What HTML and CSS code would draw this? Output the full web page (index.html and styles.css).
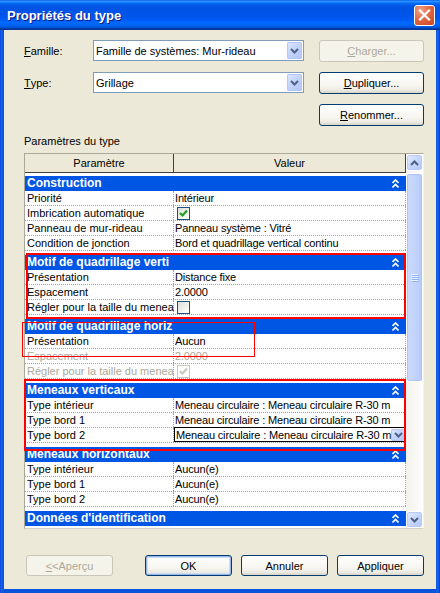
FILE: index.html
```html
<!DOCTYPE html>
<html lang="fr">
<head>
<meta charset="utf-8">
<title>Propriétés du type</title>
<link rel="stylesheet" href="styles.css">
</head>
<body>
<div class="window">
  <div class="titlebar">
    <span class="title">Propriétés du type</span>
    <span class="close"><svg width="19" height="18" viewBox="0 0 19 18"><path d="M5 4.5 L14 13.5 M14 4.5 L5 13.5" stroke="#fff" stroke-width="2.2" stroke-linecap="square"/></svg></span>
  </div>
  <div class="client">
    <div class="form">
      <span class="lbl"><u>F</u>amille:</span>
      <div class="combo"><span class="combo-text">Famille de systèmes: Mur-rideau</span><span class="dd"><svg width="9" height="6" viewBox="0 0 9 6"><path d="M1 1 L4.5 4.5 L8 1" fill="none" stroke="#4D6185" stroke-width="2"/></svg></span></div>
      <button class="btn disabled"><u>C</u>harger...</button>
      <span class="lbl"><u>T</u>ype:</span>
      <div class="combo"><span class="combo-text">Grillage</span><span class="dd"><svg width="9" height="6" viewBox="0 0 9 6"><path d="M1 1 L4.5 4.5 L8 1" fill="none" stroke="#4D6185" stroke-width="2"/></svg></span></div>
      <button class="btn"><u>D</u>upliquer...</button>
      <button class="btn r3"><u>R</u>enommer...</button>
    </div>

    <div class="section-label">Paramètres du type</div>

    <div class="grid-wrap">
      <div class="grid-box">
        <div class="grid">
          <div class="hdr"><div class="hc1">Paramètre</div><div class="hc2">Valeur</div></div>

          <div class="group first">
            <div class="ghead"><span class="gtitle">Construction</span><svg class="caret" width="7" height="9" viewBox="0 0 7 9"><path d="M0.5 4 L3.5 1 L6.5 4 M0.5 8.5 L3.5 5.5 L6.5 8.5" fill="none" stroke="#fff" stroke-width="1.6"/></svg></div>
            <div class="row"><div class="c1">Priorité</div><div class="c2">Intérieur</div></div>
            <div class="row"><div class="c1">Imbrication automatique</div><div class="c2"><span class="chk"><svg width="11" height="11" viewBox="0 0 11 11"><path d="M2 5 L4.5 7.5 L9 2.5" fill="none" stroke="#21A121" stroke-width="2.2"/></svg></span></div></div>
            <div class="row"><div class="c1">Panneau de mur-rideau</div><div class="c2">Panneau système : Vitré</div></div>
            <div class="row"><div class="c1">Condition de jonction</div><div class="c2">Bord et quadrillage vertical continu</div></div>
          </div>

          <div class="group">
            <div class="ghead"><span class="gtitle">Motif de quadrillage verti</span><svg class="caret" width="7" height="9" viewBox="0 0 7 9"><path d="M0.5 4 L3.5 1 L6.5 4 M0.5 8.5 L3.5 5.5 L6.5 8.5" fill="none" stroke="#fff" stroke-width="1.6"/></svg></div>
            <div class="row"><div class="c1">Présentation</div><div class="c2">Distance fixe</div></div>
            <div class="row"><div class="c1">Espacement</div><div class="c2">2.0000</div></div>
            <div class="row"><div class="c1">Régler pour la taille du menea</div><div class="c2"><span class="chk"></span></div></div>
          </div>

          <div class="group">
            <div class="ghead"><span class="gtitle">Motif de quadrillage horiz</span><svg class="caret" width="7" height="9" viewBox="0 0 7 9"><path d="M0.5 4 L3.5 1 L6.5 4 M0.5 8.5 L3.5 5.5 L6.5 8.5" fill="none" stroke="#fff" stroke-width="1.6"/></svg></div>
            <div class="row"><div class="c1">Présentation</div><div class="c2">Aucun</div></div>
            <div class="row off"><div class="c1">Espacement</div><div class="c2">2.0000</div></div>
            <div class="row off"><div class="c1">Régler pour la taille du menea</div><div class="c2"><span class="chk dis"><svg width="11" height="11" viewBox="0 0 11 11"><path d="M2 5 L4.5 7.5 L9 2.5" fill="none" stroke="#CAC8BB" stroke-width="2.2"/></svg></span></div></div>
          </div>

          <div class="group">
            <div class="ghead"><span class="gtitle">Meneaux verticaux</span><svg class="caret" width="7" height="9" viewBox="0 0 7 9"><path d="M0.5 4 L3.5 1 L6.5 4 M0.5 8.5 L3.5 5.5 L6.5 8.5" fill="none" stroke="#fff" stroke-width="1.6"/></svg></div>
            <div class="row"><div class="c1">Type intérieur</div><div class="c2">Meneau circulaire : Meneau circulaire R-30 m</div></div>
            <div class="row"><div class="c1">Type bord 1</div><div class="c2">Meneau circulaire : Meneau circulaire R-30 m</div></div>
            <div class="row"><div class="c1">Type bord 2</div><div class="c2 edit"><span class="edit-text">Meneau circulaire : Meneau circulaire R-30 m</span><span class="dd small"><svg width="9" height="6" viewBox="0 0 9 6"><path d="M1 1 L4.5 4.5 L8 1" fill="none" stroke="#4D6185" stroke-width="2"/></svg></span></div></div>
          </div>

          <div class="group">
            <div class="ghead"><span class="gtitle">Meneaux horizontaux</span><svg class="caret" width="7" height="9" viewBox="0 0 7 9"><path d="M0.5 4 L3.5 1 L6.5 4 M0.5 8.5 L3.5 5.5 L6.5 8.5" fill="none" stroke="#fff" stroke-width="1.6"/></svg></div>
            <div class="row"><div class="c1">Type intérieur</div><div class="c2">Aucun(e)</div></div>
            <div class="row"><div class="c1">Type bord 1</div><div class="c2">Aucun(e)</div></div>
            <div class="row"><div class="c1">Type bord 2</div><div class="c2">Aucun(e)</div></div>
          </div>

          <div class="group">
            <div class="ghead"><span class="gtitle wide">Données d'identification</span><svg class="caret" width="7" height="9" viewBox="0 0 7 9"><path d="M0.5 4 L3.5 1 L6.5 4 M0.5 8.5 L3.5 5.5 L6.5 8.5" fill="none" stroke="#fff" stroke-width="1.6"/></svg></div>
          </div>
        </div>

        <div class="vscroll">
          <span class="sb-btn"><svg width="9" height="6" viewBox="0 0 9 6"><path d="M1 5 L4.5 1.5 L8 5" fill="none" stroke="#4D6185" stroke-width="2"/></svg></span>
          <div class="track">
            <div class="thumb"><svg width="8" height="8" viewBox="0 0 8 8"><rect x="0" y="0" width="7" height="1" fill="#EEF4FE"/><rect x="1" y="1" width="7" height="1" fill="#8CB0F8"/><rect x="0" y="2" width="7" height="1" fill="#EEF4FE"/><rect x="1" y="3" width="7" height="1" fill="#8CB0F8"/><rect x="0" y="4" width="7" height="1" fill="#EEF4FE"/><rect x="1" y="5" width="7" height="1" fill="#8CB0F8"/><rect x="0" y="6" width="7" height="1" fill="#EEF4FE"/><rect x="1" y="7" width="7" height="1" fill="#8CB0F8"/></svg></div>
          </div>
          <span class="sb-btn"><svg width="9" height="6" viewBox="0 0 9 6"><path d="M1 1 L4.5 4.5 L8 1" fill="none" stroke="#4D6185" stroke-width="2"/></svg></span>
        </div>
      </div>
      <div class="mark m1"></div>
      <div class="mark m2"></div>
      <div class="mark m3"></div>
    </div>

    <div class="footer">
      <button class="btn fbtn disabled"><u>&lt;</u>&lt;Aperçu</button>
      <button class="btn fbtn default ok">OK</button>
      <button class="btn fbtn">Annuler</button>
      <button class="btn fbtn">Appliquer</button>
    </div>
  </div>
</div>
</body>
</html>
```

FILE: styles.css
```css
* { box-sizing: border-box; }
html, body { margin: 0; padding: 0; }
body {
  width: 440px;
  height: 593px;
  overflow: hidden;
  font-family: "Liberation Sans", Arial, sans-serif;
  font-size: 11px;
  color: #000;
}
.window {
  width: 440px;
  height: 593px;
  display: flex;
  flex-direction: column;
  background: linear-gradient(to right, #0831D9 0, #166AEE 1px, #0855DD 3px, #0855DD 436px, #166AEE 438px, #0831D9 440px);
}
.titlebar {
  height: 30px;
  flex: none;
  display: flex;
  align-items: center;
  justify-content: space-between;
  padding: 1px 5px 0 7px;
  background: linear-gradient(to bottom, #0058EE 0%, #3593FF 4%, #288EFF 6%, #127DFF 8%, #036FFC 10%, #0262EE 14%, #0057E5 20%, #0054E3 24%, #0055EB 56%, #005BF5 66%, #026AFE 76%, #0062EF 86%, #0052D6 92%, #0040AB 94%, #003092 100%);
}
.title {
  color: #fff;
  font-weight: bold;
  font-size: 13px;
  text-shadow: 1px 1px 0 #0A1883;
}
.close {
  width: 21px;
  height: 21px;
  margin-top: -1px;
  border: 1px solid #fff;
  border-radius: 3px;
  background: radial-gradient(circle at 30% 25%, #F0A488 0%, #E06A45 45%, #C9431F 100%);
  display: flex;
  align-items: center;
  justify-content: center;
}
.client {
  flex: 1;
  margin: 0 4px 4px;
  background: #ECE9D8;
  display: flex;
  flex-direction: column;
}
u { text-decoration: underline; text-underline-offset: 1px; }

/* top form */
.form {
  display: grid;
  grid-template-columns: 54px 211px 105px;
  grid-template-rows: 22px 22px 22px;
  column-gap: 15px;
  row-gap: 10px;
  padding: 10px 0 0 20px;
}
.lbl { display: flex; align-items: center; height: 21px; }
.combo {
  height: 21px;
  border: 1px solid #7F9DB9;
  background: #fff;
  display: flex;
  align-items: center;
  justify-content: space-between;
  padding-left: 2px;
}
.dd {
  width: 15px;
  height: 17px;
  margin-right: 1px;
  border: 1px solid #B5C8F3;
  border-radius: 1px;
  background: linear-gradient(135deg, #DCE6FD 0%, #C3D3FB 45%, #B1C6F6 100%);
  display: flex;
  align-items: center;
  justify-content: center;
}
.btn {
  font-family: "Liberation Sans", Arial, sans-serif;
  font-size: 11px;
  color: #000;
  height: 22px;
  padding: 0;
  border: 1px solid #003C74;
  border-radius: 3px;
  background: linear-gradient(to bottom, #FFFFFF 0%, #F7F6F1 60%, #EDEBE3 85%, #D8D3C6 100%);
}
.btn.disabled {
  color: #ACA899;
  border-color: #C9C7BA;
  background: #F5F4EA;
}
.r3 { grid-column: 3; grid-row: 3; }

.section-label {
  margin-top: 9px;
  padding-left: 20px;
  height: 13px;
  line-height: 13px;
}

/* property grid */
.grid-wrap {
  position: relative;
  margin: 5px 0 0 20px;
  width: 400px;
  height: 376px;
}
.grid-box {
  width: 400px;
  height: 376px;
  border: 1px solid #ACA899;
  border-right-color: #F4F3EE;
  border-bottom-color: #D4D0C8;
  display: flex;
  overflow: hidden;
  background: #fff;
}
.grid {
  width: 381px;
  flex: none;
  overflow: hidden;
}
.hdr {
  height: 19px;
  display: flex;
  background: #ECE9D8;
  border-bottom: 1px solid #3F3F3F;
}
.hc1, .hc2 {
  display: flex;
  align-items: center;
  justify-content: center;
  border-right: 1px solid #3F3F3F;
}
.hc1 { width: 149px; }
.hc2 { width: 232px; }

.group { margin-top: 4px; }
.group.first { margin-top: 3px; }
.ghead {
  height: 15px;
  background: #0056E4;
  color: #fff;
  font-weight: bold;
  font-size: 12px;
  display: flex;
  align-items: center;
  justify-content: space-between;
  padding: 0 7px 0 2px;
}
.gtitle {
  white-space: nowrap;
  line-height: 15px;
}
.caret { display: block; }

.row {
  height: 15px;
  display: flex;
  border-bottom: 1px dotted #A0A0A0;
}
.c1, .c2 {
  height: 14px;
  line-height: 14px;
  white-space: nowrap;
  border-right: 1px dotted #A0A0A0;
}
.c1 { width: 149px; padding-left: 2px; }
.c2 { width: 232px; padding-left: 1px; display: flex; align-items: center; letter-spacing: -0.15px; }
.row.off { color: #ACA899; }

.chk {
  width: 13px;
  height: 13px;
  margin-left: 2px;
  border: 1px solid #1C5180;
  background: linear-gradient(135deg, #DCDCD7 0%, #F6F6F3 70%, #FFFFFF 100%);
  display: flex;
  align-items: center;
  justify-content: center;
}
.chk.dis {
  border-color: #CAC8BB;
  background: #fff;
}
.c2.edit {
  border: 1px solid #000;
  height: 15px;
  margin-top: -1px;
  justify-content: space-between;
  padding-left: 1px;
}
.dd.small {
  width: 14px;
  height: 12px;
  margin-right: 1px;
  flex: none;
}

/* scrollbar */
.vscroll {
  width: 17px;
  flex: none;
  display: flex;
  flex-direction: column;
  background: linear-gradient(to right, #F3F1EC 0%, #FEFEFB 100%);
}
.sb-btn {
  width: 17px;
  height: 17px;
  flex: none;
  border: 1px solid #fff;
  border-radius: 3px;
  box-shadow: inset 0 0 0 1px #B7CAF5;
  background: linear-gradient(135deg, #E4ECFD 0%, #C6D6FB 50%, #B3C7F6 100%);
  display: flex;
  align-items: center;
  justify-content: center;
}
.track {
  flex: 1;
  padding-top: 2px;
}
.thumb {
  height: 209px;
  border: 1px solid #fff;
  border-radius: 3px;
  box-shadow: inset 0 0 0 1px #AFC4F4;
  background: linear-gradient(to right, #CBDAFC 0%, #C3D4FC 50%, #B6CAF8 100%);
  display: flex;
  align-items: center;
  justify-content: center;
}

/* red annotations */
.mark {
  position: absolute;
  border: 2px solid #F00;
}
.m1 { left: 2px; top: 100px; width: 380px; height: 66px; }
.m2 { left: -2px; top: 169px; width: 233px; height: 35px; border-width: 1.5px; }
.m3 { left: 0; top: 226px; width: 382px; height: 72px; }

/* footer */
.footer {
  margin-top: auto;
  display: flex;
  gap: 9px;
  padding: 0 12px 13px 22px;
}
.fbtn { width: 87px; height: 21px; }
.ok { margin-left: auto; }
.btn.default {
  box-shadow: inset 0 0 0 1px #98B5E6, inset 0 0 0 2px #CCDDF7;
}
```
